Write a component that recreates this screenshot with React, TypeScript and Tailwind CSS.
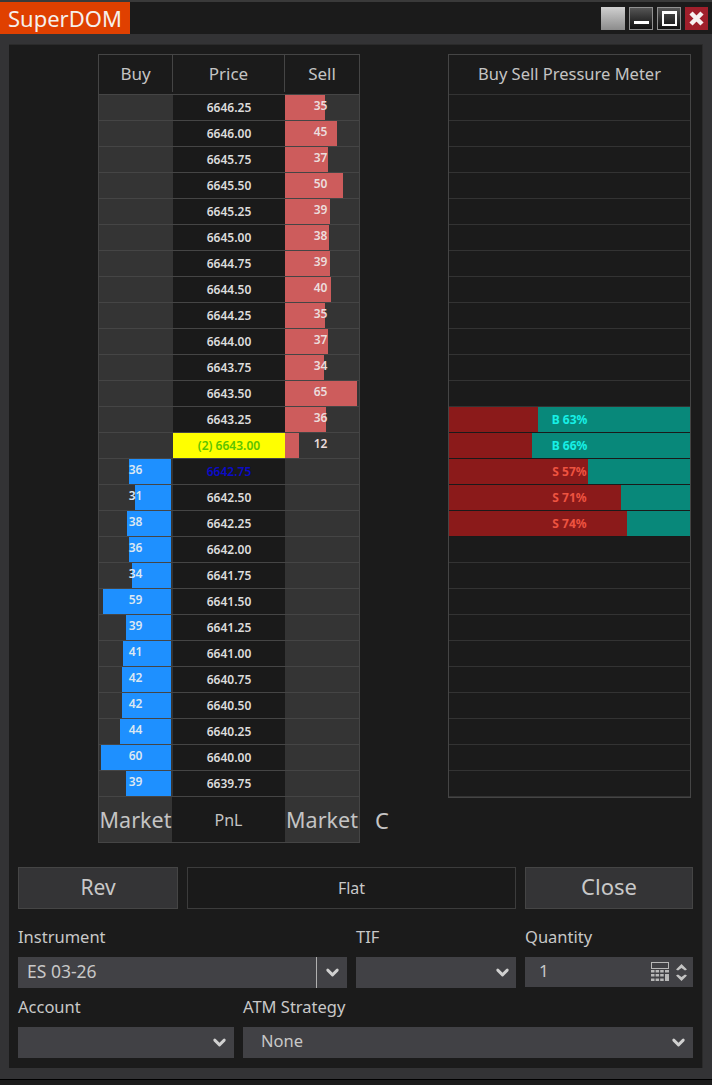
import { ChevronDown } from 'lucide-react';

const PRICES = [
  '6646.25', '6646.00', '6645.75', '6645.50', '6645.25', '6645.00', '6644.75', '6644.50', '6644.25',
  '6644.00', '6643.75', '6643.50', '6643.25', '6643.00', '6642.75', '6642.50', '6642.25', '6642.00',
  '6641.75', '6641.50', '6641.25', '6641.00', '6640.75', '6640.50', '6640.25', '6640.00', '6639.75'
];

const SELL = [35, 45, 37, 50, 39, 38, 39, 40, 35, 37, 34, 65, 36, 12];
const BUY = [36, 31, 38, 36, 34, 59, 39, 41, 42, 42, 44, 60, 39];

const PRESSURE = [
  { row: 12, label: 'B 63%', red: 89, buy: true },
  { row: 13, label: 'B 66%', red: 83, buy: true },
  { row: 14, label: 'S 57%', red: 139, buy: false },
  { row: 15, label: 'S 71%', red: 172, buy: false },
  { row: 16, label: 'S 74%', red: 178, buy: false }
];

function DomRow({ index }: { index: number }) {
  const sell = SELL[index];
  const buy = index >= 14 ? BUY[index - 14] : undefined;
  const isLast = index === 13;
  const isBlue = index === 14;

  return (
    <div className="grid h-[26px] grid-cols-[73px_113px_74px] border-b border-[#454545] bg-[#343434] text-[12px] font-semibold">
      {/* Buy cell */}
      <div className="grid">
        {buy !== undefined && (
          <>
            <div
              className="col-start-1 row-start-1 h-[25px] justify-self-end mr-[1px] bg-[#1e90ff]"
              style={{ width: buy * 1.16 }}
            />
            <span className="col-start-1 row-start-1 justify-self-center pt-[3px] leading-[16px] text-[#dbe7f2]">{buy}</span>
          </>
        )}
      </div>

      {/* Price cell */}
      <div
        className={
          isLast
            ? 'ml-px flex items-center justify-center bg-[#ffff00] text-[#5cc400]'
            : isBlue
              ? 'ml-px flex items-center justify-center bg-[#1a1a1a] text-[#0b0bc8]'
              : 'ml-px flex items-center justify-center bg-[#1a1a1a] text-[#dcdcdc]'
        }
      >
        {isLast ? `(2) ${PRICES[index]}` : PRICES[index]}
      </div>

      {/* Sell cell */}
      <div className="grid">
        {sell !== undefined && (
          <>
            <div
              className="col-start-1 row-start-1 h-[25px] justify-self-start bg-[#cd5c5c]"
              style={{ width: Math.min(sell * 1.15, 72) }}
            />
            <span className="col-start-1 row-start-1 justify-self-center pt-[3px] pr-[3px] leading-[16px] text-[#ecdcdc]">{sell}</span>
          </>
        )}
      </div>
    </div>
  );
}

function PressureRow({ index }: { index: number }) {
  const item = PRESSURE.find((p) => p.row === index);

  if (!item) {
    return <div className="h-[26px] border-b border-[#333333]" />;
  }

  return (
    <div className="grid h-[26px] border-b border-[#1a1a1a] text-[12px] font-bold">
      <div className="col-start-1 row-start-1 flex">
        <div className="bg-[#8b1a1a]" style={{ width: item.red }} />
        <div className="flex-1 bg-[#08887a]" />
      </div>
      <span
        className={
          item.buy
            ? 'col-start-1 row-start-1 self-center justify-self-center text-[#17f0e6]'
            : 'col-start-1 row-start-1 self-center justify-self-center text-[#ee5340]'
        }
      >
        {item.label}
      </span>
    </div>
  );
}

function Chevron() {
  return <ChevronDown size={19} strokeWidth={3.6} className="text-[#d0d0d0]" />;
}

function FieldLabel({ children }: { children: string }) {
  return <div className="h-[20px] text-[16.5px] leading-[20px] text-[#c8c8c8]">{children}</div>;
}

function CalcIcon() {
  return (
    <svg width="18" height="20" viewBox="0 0 18 20" className="text-[#b8b8b8]" fill="currentColor">
      <rect x="0.5" y="0.5" width="17" height="6" fill="none" stroke="currentColor" />
      <rect x="0" y="8" width="3.5" height="2.5" />
      <rect x="4.6" y="8" width="3.5" height="2.5" />
      <rect x="9.2" y="8" width="3.5" height="2.5" />
      <rect x="14" y="8" width="4" height="2.5" />
      <rect x="0" y="12" width="3.5" height="2.5" />
      <rect x="4.6" y="12" width="3.5" height="2.5" />
      <rect x="9.2" y="12" width="3.5" height="2.5" />
      <rect x="14" y="12" width="4" height="7" />
      <rect x="0" y="16.5" width="3.5" height="2.5" />
      <rect x="4.6" y="16.5" width="3.5" height="2.5" />
      <rect x="9.2" y="16.5" width="3.5" height="2.5" />
    </svg>
  );
}

function SpinIcon() {
  return (
    <svg width="11" height="20" viewBox="0 0 11 20" className="text-[#c4c4c4]" fill="currentColor">
      <path d="M5.5 2 L11 7.5 L9 8.5 L5.5 6 L2 8.5 L0 7.5 Z" />
      <path d="M5.5 19 L11 13.5 L9 12.5 L5.5 15 L2 12.5 L0 13.5 Z" />
    </svg>
  );
}

export default function App() {
  return (
    <div className="h-[1085px] w-[712px] overflow-hidden bg-[#1b1b1b] font-['Noto_Sans','Open_Sans',sans-serif]">
      {/* Title bar */}
      <div className="h-[2px] bg-[#3a3a3a]" />
      <div className="flex h-[32px] items-start justify-between bg-[#1b1b1b]">
        <div className="flex h-[32px] w-[130px] items-center bg-[#e04000] pl-[8px] text-[22px] text-[#f5f0ec]">SuperDOM</div>
        <div className="flex gap-[4px] pt-[5px] pr-[4px]">
          <div className="h-[23px] w-[24px] bg-gradient-to-b from-[#d0d0d0] to-[#8c8c8c]" />
          <div className="flex h-[23px] w-[24px] items-end justify-center border border-[#909090] bg-gradient-to-b from-[#555555] to-[#111111] pb-[5px]">
            <div className="h-[3px] w-[15px] bg-white" />
          </div>
          <div className="flex h-[23px] w-[24px] items-center justify-center border border-[#909090] bg-gradient-to-b from-[#555555] to-[#111111]">
            <div className="h-[15px] w-[15px] border-[2px] border-t-[3px] border-white" />
          </div>
          <div className="flex h-[23px] w-[23px] items-center justify-center bg-[#a01f2b]">
            <svg width="17" height="17" viewBox="0 0 17 17">
              <path d="M3 3 L14 14 M14 3 L3 14" stroke="#f6f0f0" strokeWidth="4.5" />
            </svg>
          </div>
        </div>
      </div>

      {/* Window body */}
      <div className="h-[1046px] bg-[#333335] px-[9px] pt-[10px]">
        <div className="h-[1024px] w-[694px] border-t border-r border-[#2a2a2a] bg-[#1b1b1b] pt-[9px]">
          <div className="flex items-start pl-[89px]">
            {/* Ladder */}
            <div className="w-[262px] border border-[#454545]">
              <div className="grid h-[40px] grid-cols-[73px_113px_74px] border-b border-[#454545] pb-[2px] text-[17px] text-[#c4c4c4]">
                <div className="flex items-center justify-center">Buy</div>
                <div className="flex items-center justify-center border-x border-[#454545]">Price</div>
                <div className="flex items-center justify-center">Sell</div>
              </div>
              {PRICES.map((price, i) => (
                <DomRow key={price} index={i} />
              ))}
              <div className="grid h-[45px] grid-cols-[73px_113px_74px] text-[#c4c4c4]">
                <div className="flex items-center justify-center bg-[#343434] pt-[2px] text-[21.5px]">Market</div>
                <div className="flex items-center justify-center bg-[#1a1a1a] text-[16px]">PnL</div>
                <div className="flex items-center justify-center bg-[#343434] pt-[2px] text-[21.5px]">Market</div>
              </div>
            </div>

            {/* C button */}
            <div className="w-[88px] self-end pb-[8px] pl-[15px] text-[22px] leading-[30px] text-[#c4c4c4]">C</div>

            {/* Pressure meter */}
            <div className="w-[243px] border border-[#454545]">
              <div className="flex h-[40px] items-center justify-center border-b border-[#333333] text-[16.5px] text-[#c4c4c4]">
                Buy Sell Pressure Meter
              </div>
              {PRICES.map((price, i) => (
                <PressureRow key={price} index={i} />
              ))}
            </div>
          </div>

          {/* Action buttons */}
          <div className="mt-[24px] flex gap-[9px] pl-[9px]">
            <div className="flex h-[42px] w-[160px] items-center justify-center border border-[#454545] bg-[#343436] text-[21px] text-[#c8c8c8]">Rev</div>
            <div className="flex h-[42px] w-[329px] items-center justify-center border border-[#3c3c3c] bg-[#1a1a1a] text-[16px] text-[#c8c8c8]">Flat</div>
            <div className="flex h-[42px] w-[168px] items-center justify-center border border-[#454545] bg-[#343436] pb-[3px] text-[22px] text-[#c8c8c8]">Close</div>
          </div>

          {/* Instrument / TIF / Quantity */}
          <div className="mt-[18px] flex gap-[9px] pl-[9px]">
            <div className="w-[329px]">
              <FieldLabel>Instrument</FieldLabel>
              <div className="mt-[10px] flex h-[31px] items-center bg-[#414145]">
                <div className="flex-1 pb-[2px] pl-[9px] text-[17.5px] text-[#c8c8c8]">ES 03-26</div>
                <div className="h-[31px] w-px bg-[#b0b0b0]" />
                <div className="flex w-[30px] justify-center"><Chevron /></div>
              </div>
            </div>
            <div className="w-[160px]">
              <FieldLabel>TIF</FieldLabel>
              <div className="mt-[10px] flex h-[31px] items-center justify-end bg-[#414145] pr-[4px]"><Chevron /></div>
            </div>
            <div className="w-[168px]">
              <FieldLabel>Quantity</FieldLabel>
              <div className="mt-[10px] flex h-[30px] items-center bg-[#414145] pr-[6px] pl-[14px]">
                <span className="flex-1 pb-[2px] text-[17px] text-[#c8c8c8]">1</span>
                <CalcIcon />
                <div className="ml-[7px] flex"><SpinIcon /></div>
              </div>
            </div>
          </div>

          {/* Account / ATM */}
          <div className="mt-[9px] flex gap-[9px] pl-[9px]">
            <div className="w-[216px]">
              <FieldLabel>Account</FieldLabel>
              <div className="mt-[10px] flex h-[31px] items-center justify-end bg-[#414145] pr-[5px]"><Chevron /></div>
            </div>
            <div className="w-[450px]">
              <FieldLabel>ATM Strategy</FieldLabel>
              <div className="mt-[10px] flex h-[31px] items-center bg-[#414145] pr-[5px] pl-[18px]">
                <span className="flex-1 pb-[2px] text-[16.5px] text-[#c8c8c8]">None</span>
                <Chevron />
              </div>
            </div>
          </div>
        </div>
        <div className="mt-[11px] h-[1px] -mx-[9px] bg-[#000000]" />
      </div>
    </div>
  );
}
